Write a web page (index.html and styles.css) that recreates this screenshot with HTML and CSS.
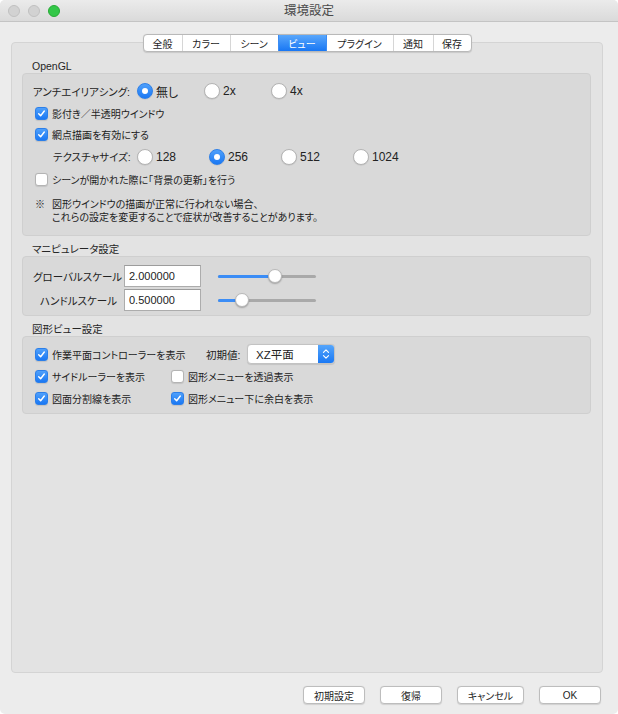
FILE: index.html
```html
<!DOCTYPE html>
<html lang="ja">
<head>
<meta charset="utf-8">
<title>環境設定</title>
<link rel="stylesheet" href="styles.css">
</head>
<body>
<div class="window">
  <div class="titlebar">
    <div class="lights">
      <span class="light gray"></span>
      <span class="light gray"></span>
      <span class="light green"></span>
    </div>
    <div class="title">環境設定</div>
    <div></div>
  </div>

  <div class="content">
    <div class="tabview">
      <div class="tabs">
        <div class="tab t-a">全般</div>
        <div class="tab t-b">カラー</div>
        <div class="tab t-b">シーン</div>
        <div class="tab t-b sel">ビュー</div>
        <div class="tab t-c">プラグイン</div>
        <div class="tab t-d">通知</div>
        <div class="tab t-a">保存</div>
      </div>

      <div class="pane">
        <div class="group-title first">OpenGL</div>
        <div class="group g1">
          <div class="row h22">
            <span class="rowlabel aa">アンチエイリアシング:</span>
            <span class="ritem w67"><span class="radio on"></span><span class="rlabel">無し</span></span>
            <span class="ritem w67"><span class="radio"></span><span class="rlabel">2x</span></span>
            <span class="ritem w67"><span class="radio"></span><span class="rlabel">4x</span></span>
          </div>
          <div class="row h22">
            <span class="citem"><span class="check on"><svg viewBox="0 0 13 13"><path d="M3.2 6.8 L5.5 9.2 L9.8 3.6"/></svg></span><span class="clabel">影付き／半透明ウインドウ</span></span>
          </div>
          <div class="row h21">
            <span class="citem"><span class="check on"><svg viewBox="0 0 13 13"><path d="M3.2 6.8 L5.5 9.2 L9.8 3.6"/></svg></span><span class="clabel">網点描画を有効にする</span></span>
          </div>
          <div class="row h23">
            <span class="rowlabel tex">テクスチャサイズ:</span>
            <span class="ritem w72"><span class="radio"></span><span class="rlabel">128</span></span>
            <span class="ritem w72"><span class="radio on"></span><span class="rlabel">256</span></span>
            <span class="ritem w72"><span class="radio"></span><span class="rlabel">512</span></span>
            <span class="ritem w72"><span class="radio"></span><span class="rlabel">1024</span></span>
          </div>
          <div class="row h22">
            <span class="citem"><span class="check"></span><span class="clabel">シーンが開かれた際に「背景の更新」を行う</span></span>
          </div>
          <div class="note">
            <span class="mark">※</span>
            <span>図形ウインドウの描画が正常に行われない場合、</span>
            <span></span>
            <span>これらの設定を変更することで症状が改善することがあります。</span>
          </div>
        </div>

        <div class="group-title">マニピュレータ設定</div>
        <div class="group g2">
          <div class="srow">
            <span class="flabel">グローバルスケール</span>
            <span class="field">2.000000</span>
            <span class="slider" style="--v:58.5%"><span class="track"><span class="fill"></span></span><span class="thumb"></span></span>
          </div>
          <div class="srow">
            <span class="flabel">ハンドルスケール</span>
            <span class="field">0.500000</span>
            <span class="slider" style="--v:24%"><span class="track"><span class="fill"></span></span><span class="thumb"></span></span>
          </div>
        </div>

        <div class="group-title">図形ビュー設定</div>
        <div class="group g3">
          <div class="row h22">
            <span class="citem col-wide"><span class="check on"><svg viewBox="0 0 13 13"><path d="M3.2 6.8 L5.5 9.2 L9.8 3.6"/></svg></span><span class="clabel">作業平面コントローラーを表示</span></span>
            <span class="plabel">初期値:</span>
            <span class="popup">
              <span class="ptext">XZ平面</span>
              <span class="stepper"><svg viewBox="0 0 16 20"><path d="M5.2 8.2 L8 5.4 L10.8 8.2 M5.2 11.8 L8 14.6 L10.8 11.8"/></svg></span>
            </span>
          </div>
          <div class="row h22">
            <span class="citem col1"><span class="check on"><svg viewBox="0 0 13 13"><path d="M3.2 6.8 L5.5 9.2 L9.8 3.6"/></svg></span><span class="clabel">サイドルーラーを表示</span></span>
            <span class="citem"><span class="check"></span><span class="clabel">図形メニューを透過表示</span></span>
          </div>
          <div class="row h22">
            <span class="citem col1"><span class="check on"><svg viewBox="0 0 13 13"><path d="M3.2 6.8 L5.5 9.2 L9.8 3.6"/></svg></span><span class="clabel">図面分割線を表示</span></span>
            <span class="citem"><span class="check on"><svg viewBox="0 0 13 13"><path d="M3.2 6.8 L5.5 9.2 L9.8 3.6"/></svg></span><span class="clabel">図形メニュー下に余白を表示</span></span>
          </div>
        </div>
      </div>
    </div>

    <div class="buttons">
      <span class="btn w62">初期設定</span>
      <span class="btn w62">復帰</span>
      <span class="btn w67">キャンセル</span>
      <span class="btn w62">OK</span>
    </div>
  </div>
</div>
</body>
</html>
```

FILE: styles.css
```css
* { box-sizing: border-box; }
html, body { margin: 0; padding: 0; }
body {
  width: 618px;
  height: 714px;
  background: #ffffff;
  font-family: "Liberation Sans", "Noto Sans CJK JP", sans-serif;
  font-feature-settings: "palt";
  color: #222222;
  overflow: hidden;
}
.window {
  width: 618px;
  height: 714px;
  background: #ececec;
  border-radius: 5px;
  overflow: hidden;
  display: flex;
  flex-direction: column;
}

/* title bar */
.titlebar {
  height: 22px;
  flex: none;
  background: linear-gradient(#ebebeb, #dadada);
  border-bottom: 1px solid #c4c4c4;
  display: grid;
  grid-template-columns: 1fr auto 1fr;
  align-items: center;
}
.lights { display: flex; gap: 8px; padding-left: 8px; }
.light { width: 12px; height: 12px; border-radius: 50%; }
.light.gray { background: #d2d2d2; border: 1px solid #c0c0c0; }
.light.green { background: #33c748; border: 1px solid #27aa35; }
.title { font-size: 12.5px; color: #4a4a4a; line-height: 22px; }

/* content */
.content { padding: 20px 15px 0 11px; }
.tabview {
  height: 631px;
  background: #e3e3e3;
  border: 1px solid #d4d4d4;
  border-radius: 4px;
  display: flex;
  flex-direction: column;
}
.tabs {
  display: flex;
  margin: -9px auto 0;
  height: 18px;
  background: #ffffff;
  border: 1px solid #b9b9b9;
  border-radius: 4px;
  box-shadow: 0 0.5px 1px rgba(0,0,0,0.12);
  overflow: hidden;
}
.tab {
  display: flex;
  align-items: center;
  justify-content: center;
  font-size: 10px;
  color: #1e1e1e;
  border-left: 1px solid #d6d6d6;
}
.tab:first-child { border-left: none; }
.t-a { width: 38px; }
.t-b { width: 48px; }
.t-c { width: 67px; }
.t-d { width: 40px; }
.tab.sel {
  background: linear-gradient(#5aa7fb, #1877f4);
  color: #ffffff;
  border-left-color: #3b8cf4;
}
.tab.sel + .tab { border-left-color: #3b8cf4; }

.pane { padding: 7px 11px 0 10px; }
.group-title {
  height: 14px;
  line-height: 14px;
  font-size: 10.5px;
  padding-left: 10px;
  margin-top: 6px;
  color: #262626;
}
.group-title.first { margin-top: 0; }
.group {
  background: #d9d9d9;
  border: 1px solid #cfcfcf;
  border-radius: 4px;
}
.g1 { padding: 6px 10px 11px 10px; }
.g2 { padding: 8px 10px 4px 10px; display: flex; flex-direction: column; gap: 2px; }
.g3 { padding: 6px 10px 4px 10px; }

.row { display: flex; align-items: center; }
.h21 { height: 21px; }
.h22 { height: 22px; }
.h23 { height: 23px; }

.rowlabel { font-size: 10.5px; white-space: nowrap; }
.aa { width: 104px; }
.tex { width: 84px; margin-left: 20px; }

.ritem { display: flex; align-items: center; }
.w67 { width: 67px; }
.w72 { width: 72px; }
.rlabel { font-size: 12px; margin-left: 3px; }
.radio {
  width: 16px;
  height: 16px;
  flex: none;
  border-radius: 50%;
  background: #ffffff;
  border: 1px solid #b4b4b4;
  box-shadow: 0 0.5px 1px rgba(0,0,0,0.12);
  display: flex;
  align-items: center;
  justify-content: center;
}
.radio.on {
  background: linear-gradient(#4fa0fb, #1a78f4);
  border-color: #2c7fe9;
}
.radio.on::after {
  content: "";
  width: 6px;
  height: 6px;
  border-radius: 50%;
  background: #ffffff;
}

.citem { display: flex; align-items: center; margin-left: 2px; }
.check {
  width: 13px;
  height: 13px;
  flex: none;
  border-radius: 3px;
  background: #ffffff;
  border: 1px solid #b4b4b4;
  box-shadow: 0 0.5px 1px rgba(0,0,0,0.1);
  display: flex;
}
.check.on {
  background: linear-gradient(#4fa0fb, #1a78f4);
  border-color: #2c7fe9;
}
.check svg { width: 11px; height: 11px; }
.check svg path { fill: none; stroke: #ffffff; stroke-width: 1.7; stroke-linecap: round; stroke-linejoin: round; }
.clabel { font-size: 10px; margin-left: 4px; white-space: nowrap; }

.note {
  margin-top: 8px;
  display: grid;
  grid-template-columns: 17px auto;
  font-size: 10px;
  line-height: 13px;
  padding-left: 2px;
}

/* manipulator */
.srow { display: flex; align-items: center; height: 22px; }
.flabel { width: 84px; text-align: right; font-size: 10.5px; white-space: nowrap; }
.field {
  width: 77px;
  height: 22px;
  margin-left: 7px;
  background: #ffffff;
  border: 1px solid #acacac;
  border-top-color: #9c9c9c;
  font-size: 11px;
  padding-left: 4px;
  display: flex;
  align-items: center;
}
.slider {
  --v: 50%;
  position: relative;
  width: 98px;
  height: 14px;
  margin-left: 17px;
  display: flex;
  align-items: center;
}
.track {
  width: 100%;
  height: 3px;
  border-radius: 2px;
  background: #a9a9a9;
  display: flex;
}
.fill { width: var(--v); height: 3px; border-radius: 2px; background: #3b8df6; }
.thumb {
  position: absolute;
  left: var(--v);
  top: 0;
  width: 14px;
  height: 14px;
  margin-left: -7px;
  border-radius: 50%;
  background: #ffffff;
  border: 0.5px solid #b9b9b9;
  box-shadow: 0 1px 1.5px rgba(0,0,0,0.25);
}

/* view settings */
.col-wide { width: 171px; }
.col1 { width: 134px; }
.plabel { width: 41px; font-size: 10.5px; }
.popup {
  width: 88px;
  height: 20px;
  display: flex;
  background: #ffffff;
  border: 1px solid #c3c3c3;
  border-radius: 4px;
  box-shadow: 0 0.5px 1px rgba(0,0,0,0.1);
  overflow: hidden;
}
.ptext { flex: 1; font-size: 11.5px; padding-left: 8px; display: flex; align-items: center; }
.stepper {
  width: 16px;
  background: linear-gradient(#55a5fb, #1a78f4);
  display: flex;
}
.stepper svg { width: 16px; height: 18px; }
.stepper svg path { fill: none; stroke: #ffffff; stroke-width: 1.3; stroke-linecap: round; stroke-linejoin: round; }

/* buttons */
.buttons {
  display: flex;
  justify-content: flex-end;
  gap: 15px;
  margin-top: 13px;
  padding-right: 2px;
}
.btn {
  height: 18px;
  background: #ffffff;
  border: 1px solid #bdbdbd;
  border-radius: 4px;
  box-shadow: 0 0.5px 1px rgba(0,0,0,0.12);
  font-size: 10px;
  display: flex;
  align-items: center;
  justify-content: center;
  color: #1e1e1e;
}
.w62 { width: 62px; }
.btn.w67 { width: 67px; }
```
